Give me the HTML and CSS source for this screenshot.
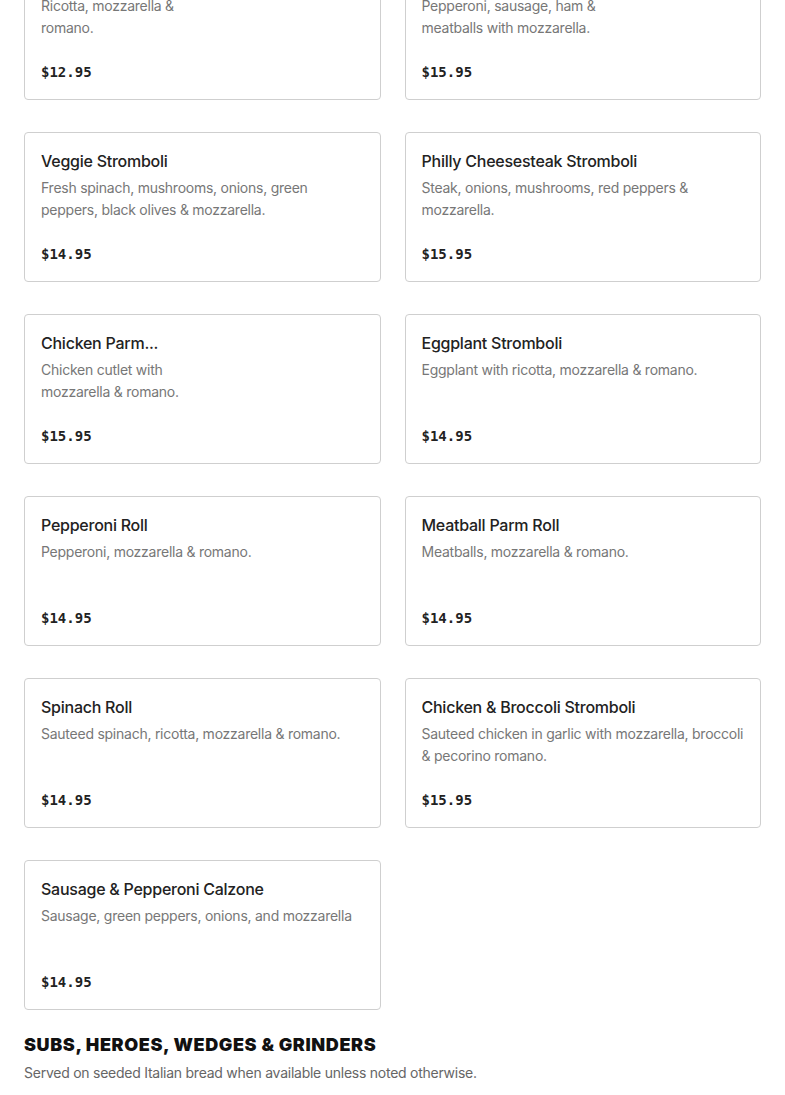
FILE: index.html
```html
<!DOCTYPE html>
<html lang="en">
<head>
<meta charset="utf-8">
<title>Menu</title>
<link rel="stylesheet" href="styles.css">
</head>
<body>
<main class="page">
  <section class="grid">
    <article class="card has-img">
      <h3 class="card-title">Cheese Stromboli</h3>
      <p class="card-desc">Ricotta, mozzarella &amp; romano.</p>
      <div class="card-price">$12.95</div>
    </article>
    <article class="card has-img">
      <h3 class="card-title">Meat Lovers Stromboli</h3>
      <p class="card-desc">Pepperoni, sausage, ham &amp; meatballs with mozzarella.</p>
      <div class="card-price">$15.95</div>
    </article>
    <article class="card">
      <h3 class="card-title">Veggie Stromboli</h3>
      <p class="card-desc">Fresh spinach, mushrooms, onions, green peppers, black olives &amp; mozzarella.</p>
      <div class="card-price">$14.95</div>
    </article>
    <article class="card">
      <h3 class="card-title">Philly Cheesesteak Stromboli</h3>
      <p class="card-desc">Steak, onions, mushrooms, red peppers &amp; mozzarella.</p>
      <div class="card-price">$15.95</div>
    </article>
    <article class="card has-img">
      <h3 class="card-title">Chicken Parm...</h3>
      <p class="card-desc">Chicken cutlet with mozzarella &amp; romano.</p>
      <div class="card-price">$15.95</div>
    </article>
    <article class="card">
      <h3 class="card-title">Eggplant Stromboli</h3>
      <p class="card-desc">Eggplant with ricotta, mozzarella &amp; romano.</p>
      <div class="card-price">$14.95</div>
    </article>
    <article class="card">
      <h3 class="card-title">Pepperoni Roll</h3>
      <p class="card-desc">Pepperoni, mozzarella &amp; romano.</p>
      <div class="card-price">$14.95</div>
    </article>
    <article class="card">
      <h3 class="card-title">Meatball Parm Roll</h3>
      <p class="card-desc">Meatballs, mozzarella &amp; romano.</p>
      <div class="card-price">$14.95</div>
    </article>
    <article class="card">
      <h3 class="card-title">Spinach Roll</h3>
      <p class="card-desc">Sauteed spinach, ricotta, mozzarella &amp; romano.</p>
      <div class="card-price">$14.95</div>
    </article>
    <article class="card">
      <h3 class="card-title">Chicken &amp; Broccoli Stromboli</h3>
      <p class="card-desc">Sauteed chicken in garlic with mozzarella, broccoli &amp; pecorino romano.</p>
      <div class="card-price">$15.95</div>
    </article>
    <article class="card">
      <h3 class="card-title">Sausage &amp; Pepperoni Calzone</h3>
      <p class="card-desc">Sausage, green peppers, onions, and mozzarella</p>
      <div class="card-price">$14.95</div>
    </article>
  </section>
  <section class="section-head">
    <h2 class="section-title">SUBS, HEROES, WEDGES &amp; GRINDERS</h2>
    <p class="section-sub">Served on seeded Italian bread when available unless noted otherwise.</p>
  </section>
</main>
</body>
</html>
```

FILE: styles.css
```css
* { box-sizing: border-box; }
html, body { margin: 0; padding: 0; background: #fff; }
body {
  font-family: Inter, "Liberation Sans", Arial, sans-serif;
  color: #222;
  overflow: hidden;
}
.page {
  padding: 0 24px;
}
.grid {
  display: grid;
  grid-template-columns: 1fr 1fr;
  column-gap: 24px;
  row-gap: 32px;
  margin-top: -50px;
}
.card {
  height: 150px;
  border: 1px solid #cfcfcf;
  border-radius: 4px;
  padding: 16px;
  display: flex;
  flex-direction: column;
}
.card-title {
  margin: 0;
  font-size: 16px;
  line-height: 24px;
  font-weight: 500;
  letter-spacing: -0.25px;
  color: #222;
  white-space: nowrap;
  overflow: hidden;
}
.card-desc {
  margin: 4px 0 0;
  font-size: 14px;
  line-height: 22px;
  letter-spacing: -0.25px;
  color: #777;
  height: 44px;
}
.has-img .card-desc,
.has-img .card-title {
  max-width: 182px;
}
.card-price {
  margin-top: auto;
  font-family: "DejaVu Sans Mono", "Liberation Mono", monospace;
  font-weight: bold;
  font-size: 14px;
  line-height: 22px;
  color: #222;
}
.section-head {
  padding-top: 23px;
}
.section-title {
  margin: 0;
  font-size: 18px;
  line-height: 24px;
  font-weight: 900;
  letter-spacing: 0.6px;
  color: #111;
}
.section-sub {
  margin: 5px 0 0;
  font-size: 14px;
  line-height: 22px;
  letter-spacing: -0.25px;
  color: #666;
}
```
